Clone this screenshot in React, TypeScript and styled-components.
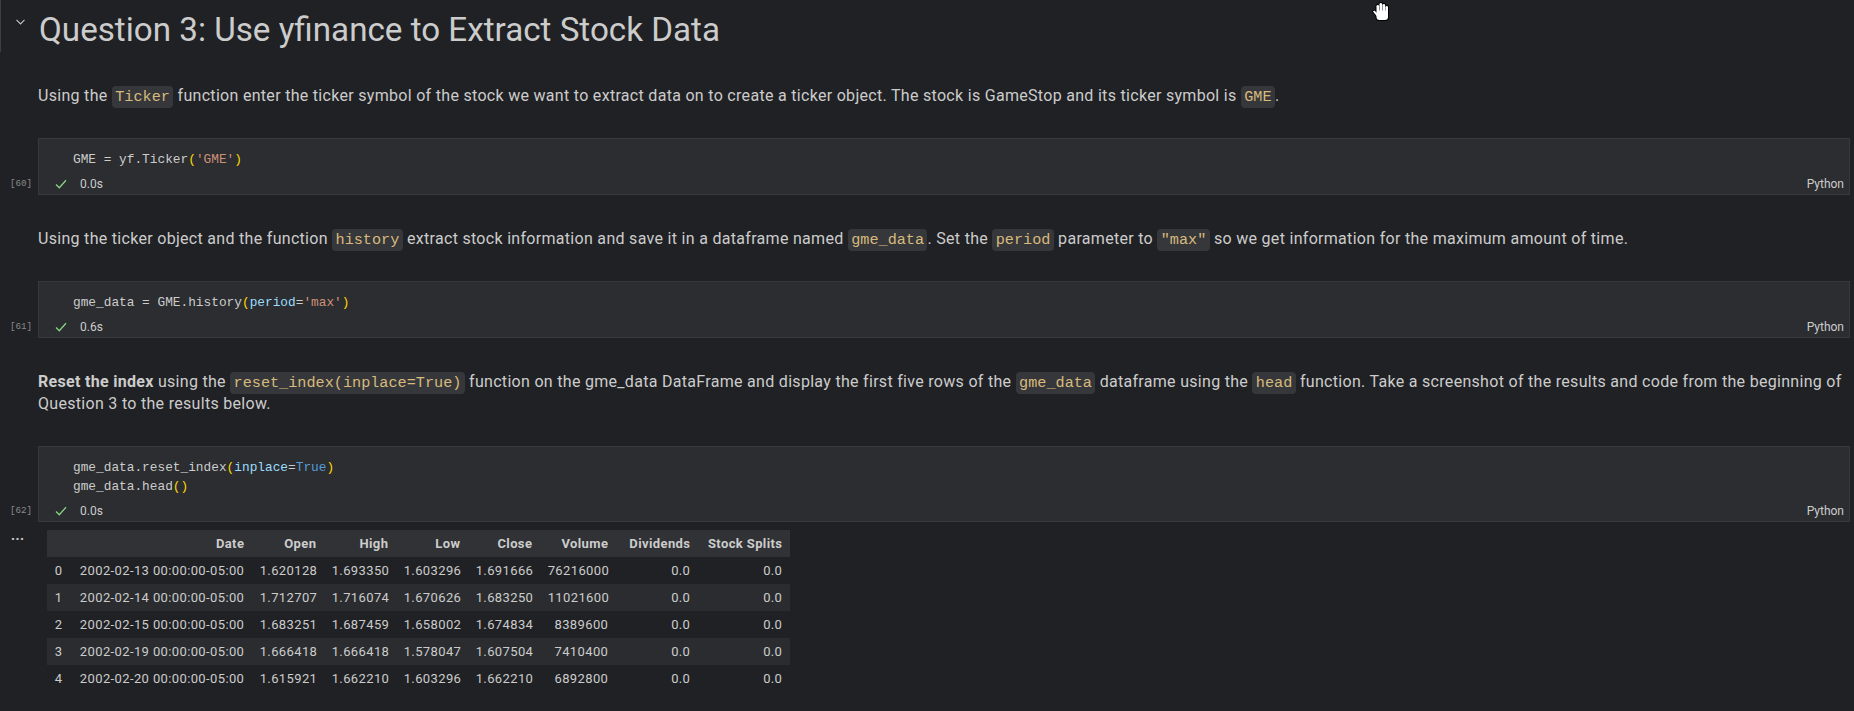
import React from "react";
import styled, { createGlobalStyle } from "styled-components";

const GlobalStyle = createGlobalStyle`
  html, body {
    margin: 0;
    padding: 0;
    background: #202124;
    overflow: hidden;
  }
  body {
    font-family: Roboto, "Liberation Sans", sans-serif;
    color: #cccccc;
  }
`;

const Page = styled.main`
  position: relative;
  width: 1854px;
  height: 711px;
  display: flex;
  flex-direction: column;
  box-sizing: border-box;
  padding-right: 4px;
`;

const HeadingCell = styled.section`
  display: flex;
  align-items: flex-start;
  height: 52px;
  border-left: 1px solid #3c3e41;
  padding-left: 15px;
  box-sizing: border-box;
`;

const Chevron = styled.svg`
  flex-shrink: 0;
  margin-top: 19px;
`;

const H1 = styled.h1`
  margin: 0 0 0 14px;
  padding-top: 8px;
  font-size: 33.2px;
  line-height: 44px;
  font-weight: 400;
  color: #cccccc;
  white-space: nowrap;
`;

const Markdown = styled.p`
  margin: 33.25px 0 0;
  padding-left: 38px;
  font-size: 16px;
  line-height: 22.5px;
  letter-spacing: 0.3px;
  color: #cccccc;
  white-space: nowrap;
`;

const InlineCode = styled.code`
  font-family: "Liberation Mono", monospace;
  font-size: 15.2px;
  line-height: 1;
  letter-spacing: 0;
  color: #d7ba7d;
  background: rgba(255, 255, 255, 0.1);
  padding: 2px 3.4px;
  border-radius: 4px;
`;

const CodeCell = styled.section`
  display: flex;
  margin-top: 30px;
`;

const Gutter = styled.div`
  width: 38px;
  flex-shrink: 0;
  display: flex;
  align-items: flex-end;
  padding-left: 10px;
  box-sizing: border-box;
`;

const ExecCount = styled.span`
  height: 20px;
  line-height: 20px;
  margin-bottom: 1px;
  font-family: "Liberation Mono", monospace;
  font-size: 9.2px;
  color: #8a8a8a;
`;

const CellBox = styled.div`
  flex: 1;
  background: #2b2d30;
  border: 1px solid #37393c;
  display: flex;
  flex-direction: column;
`;

const CodeArea = styled.pre`
  margin: 0;
  padding: 11px 0 5px 34px;
  font-family: "Liberation Mono", monospace;
  font-size: 12.8px;
  line-height: 19px;
  color: #cccccc;
`;

const StatusRow = styled.div`
  height: 20px;
  display: flex;
  align-items: center;
  padding: 0 5px 0 16px;
  font-size: 12px;
  color: #cccccc;
`;

const Duration = styled.span`
  margin-left: 13px;
`;

const Lang = styled.span`
  margin-left: auto;
`;

const Tok = styled.span<{ $c: string }>`
  color: ${(p) => p.$c};
`;

const Output = styled.section`
  display: flex;
  margin-top: 8px;
`;

const OutGutter = styled.div`
  width: 38px;
  flex-shrink: 0;
  padding-left: 11px;
  box-sizing: border-box;
  font-size: 14px;
  line-height: 10px;
  font-weight: 700;
  letter-spacing: 0.5px;
  color: #cccccc;
`;

const TableWrap = styled.div`
  padding-left: 9px;
`;

const Table = styled.table`
  border-collapse: collapse;
  table-layout: fixed;
  width: 743px;
  font-size: 13px;
  letter-spacing: 0.38px;
  color: #cccccc;
`;

const Th = styled.th`
  height: 27px;
  padding: 0 7.7px;
  text-align: right;
  font-weight: 700;
  background: #303235;
  white-space: nowrap;
`;

const Td = styled.td<{ $left?: boolean }>`
  height: 27px;
  padding: 0 7.7px;
  text-align: ${(p) => (p.$left ? "left" : "right")};
  white-space: nowrap;
`;

const Row = styled.tr`
  &:nth-child(even) {
    background: #2a2c2f;
  }
`;

const Cursor = styled.svg`
  position: absolute;
  left: 1372px;
  top: 2px;
`;

const P = "#ffd700";
const S = "#ce9178";
const V = "#9cdcfe";
const K = "#569cd6";

const CheckIcon = () => (
  <svg width="12" height="12" viewBox="0 0 12 12">
    <polyline points="1,6.5 4.3,9.8 11,2.2" fill="none" stroke="#89d185" strokeWidth="1.3" />
  </svg>
);

const cols = [24, 181, 72, 72, 72, 72, 76, 82, 92];
const headers = ["", "Date", "Open", "High", "Low", "Close", "Volume", "Dividends", "Stock Splits"];
const rows = [
  ["0", "2002-02-13 00:00:00-05:00", "1.620128", "1.693350", "1.603296", "1.691666", "76216000", "0.0", "0.0"],
  ["1", "2002-02-14 00:00:00-05:00", "1.712707", "1.716074", "1.670626", "1.683250", "11021600", "0.0", "0.0"],
  ["2", "2002-02-15 00:00:00-05:00", "1.683251", "1.687459", "1.658002", "1.674834", "8389600", "0.0", "0.0"],
  ["3", "2002-02-19 00:00:00-05:00", "1.666418", "1.666418", "1.578047", "1.607504", "7410400", "0.0", "0.0"],
  ["4", "2002-02-20 00:00:00-05:00", "1.615921", "1.662210", "1.603296", "1.662210", "6892800", "0.0", "0.0"],
];

const Cell = ({ count, time, children }: { count: number; time: string; children: React.ReactNode }) => (
  <CodeCell>
    <Gutter>
      <ExecCount>[{count}]</ExecCount>
    </Gutter>
    <CellBox>
      <CodeArea>{children}</CodeArea>
      <StatusRow>
        <CheckIcon />
        <Duration>{time}</Duration>
        <Lang>Python</Lang>
      </StatusRow>
    </CellBox>
  </CodeCell>
);

const handShapes = (
  <>
    <rect x="4.5" y="3" width="2.6" height="9" rx="1.3" />
    <rect x="7.5" y="1" width="2.6" height="10" rx="1.3" />
    <rect x="10.5" y="2" width="2.6" height="10" rx="1.3" />
    <rect x="13.4" y="4" width="2.6" height="9" rx="1.3" />
    <rect x="4.5" y="8.5" width="11.5" height="9.5" rx="3" />
    <polygon points="1,9.5 2.6,8.6 6,12.5 5,14.5" />
  </>
);

export default function App() {
  return (
    <>
      <GlobalStyle />
      <Page>
        <HeadingCell>
          <Chevron width="9" height="6" viewBox="0 0 9 6">
            <polyline points="0.5,0.8 4.5,5 8.5,0.8" fill="none" stroke="#c5c5c5" strokeWidth="1.1" />
          </Chevron>
          <H1>Question 3: Use yfinance to Extract Stock Data</H1>
        </HeadingCell>

        <Markdown>
          Using the <InlineCode>Ticker</InlineCode> function enter the ticker symbol of the stock we want to extract
          data on to create a ticker object. The stock is GameStop and its ticker symbol is <InlineCode>GME</InlineCode>.
        </Markdown>

        <Cell count={60} time="0.0s">
          GME = yf.Ticker<Tok $c={P}>(</Tok>
          <Tok $c={S}>'GME'</Tok>
          <Tok $c={P}>)</Tok>
        </Cell>

        <Markdown>
          Using the ticker object and the function <InlineCode>history</InlineCode> extract stock information and save
          it in a dataframe named <InlineCode>gme_data</InlineCode>. Set the <InlineCode>period</InlineCode> parameter to{" "}
          <InlineCode>"max"</InlineCode> so we get information for the maximum amount of time.
        </Markdown>

        <Cell count={61} time="0.6s">
          gme_data = GME.history<Tok $c={P}>(</Tok>
          <Tok $c={V}>period</Tok>=<Tok $c={S}>'max'</Tok>
          <Tok $c={P}>)</Tok>
        </Cell>

        <Markdown>
          <b>Reset the index</b> using the <InlineCode>reset_index(inplace=True)</InlineCode> function on the gme_data
          DataFrame and display the first five rows of the <InlineCode>gme_data</InlineCode> dataframe using the{" "}
          <InlineCode>head</InlineCode> function. Take a screenshot of the results and code from the beginning of
          <br />
          Question 3 to the results below.
        </Markdown>

        <Cell count={62} time="0.0s">
          gme_data.reset_index<Tok $c={P}>(</Tok>
          <Tok $c={V}>inplace</Tok>=<Tok $c={K}>True</Tok>
          <Tok $c={P}>)</Tok>
          {"\n"}gme_data.head<Tok $c={P}>()</Tok>
        </Cell>

        <Output>
          <OutGutter>...</OutGutter>
          <TableWrap>
            <Table>
              <colgroup>
                {cols.map((w, i) => (
                  <col key={i} style={{ width: w }} />
                ))}
              </colgroup>
              <thead>
                <tr>
                  {headers.map((h, i) => (
                    <Th key={i}>{h}</Th>
                  ))}
                </tr>
              </thead>
              <tbody>
                {rows.map((r, i) => (
                  <Row key={i}>
                    {r.map((c, j) => (
                      <Td key={j} $left={j === 0}>
                        {c}
                      </Td>
                    ))}
                  </Row>
                ))}
              </tbody>
            </Table>
          </TableWrap>
        </Output>

        <Cursor width="18" height="19" viewBox="0 0 18 19">
          <g fill="#000" stroke="#000" strokeWidth="2" strokeLinejoin="round">
            {handShapes}
          </g>
          <g fill="#ffffff">{handShapes}</g>
        </Cursor>
      </Page>
    </>
  );
}
